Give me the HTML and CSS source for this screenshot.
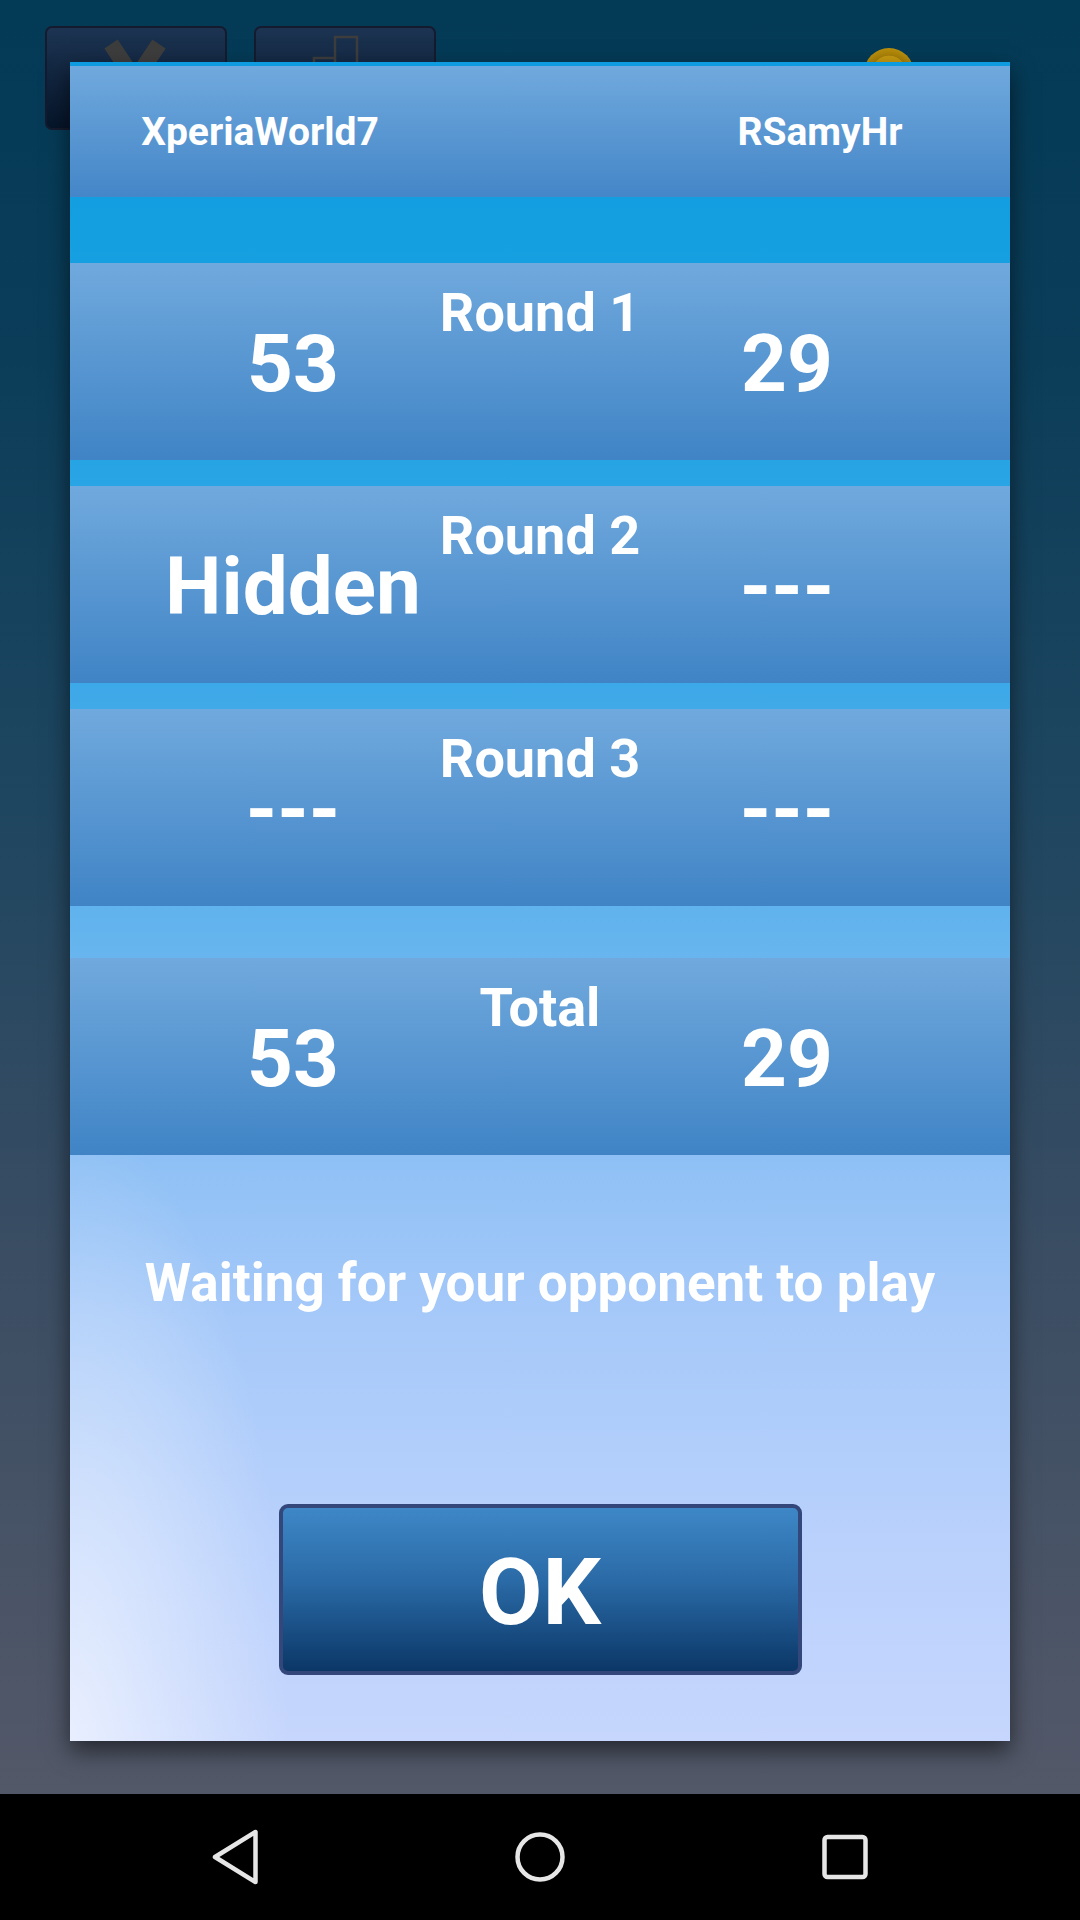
FILE: index.html
```html
<!DOCTYPE html>
<html lang="en">
<head>
  <meta charset="UTF-8">
  <title>Match Result</title>
  <link rel="stylesheet" href="styles.css">
</head>
<body>

  <div class="screen">
    <div class="toolbar">
      <div class="tool-btn">
        <svg class="tool-icon" viewBox="0 0 182 104" width="182" height="104">
          <path d="M66 18 L114 90 M114 18 L66 90" stroke="#3d3d3d" stroke-width="16" fill="none"/>
        </svg>
      </div>
      <div class="tool-btn">
        <svg class="tool-icon" viewBox="0 0 182 104" width="182" height="104">
          <path d="M60 90 V32 H81 M81 90 V11 H103 V90 M103 90 V50 H124 V90" stroke="#3d3d3d" stroke-width="2.5" fill="none"/>
        </svg>
      </div>
      <div class="toolbar-right">
        <span class="coin"></span>
        <span class="gem"></span>
      </div>
    </div>

    <div class="dialog">
      <div class="header">
        <div class="name">XperiaWorld7</div>
        <div class="name">RSamyHr</div>
      </div>

      <div class="scores">
        <div class="row">
          <div class="row-label">Round 1</div>
          <div class="row-values">
            <div class="value">53</div>
            <div class="value">29</div>
          </div>
        </div>
        <div class="row">
          <div class="row-label">Round 2</div>
          <div class="row-values">
            <div class="value">Hidden</div>
            <div class="value dash">---</div>
          </div>
        </div>
        <div class="row">
          <div class="row-label">Round 3</div>
          <div class="row-values">
            <div class="value dash">---</div>
            <div class="value dash">---</div>
          </div>
        </div>
        <div class="row total">
          <div class="row-label">Total</div>
          <div class="row-values">
            <div class="value">53</div>
            <div class="value">29</div>
          </div>
        </div>
      </div>

      <div class="message">
        <p>Waiting for your opponent to play</p>
        <button class="ok-btn">OK</button>
      </div>
    </div>
  </div>

  <div class="navbar">
    <svg class="nav-icon" viewBox="0 0 60 60" width="60" height="60">
      <path d="M50.5 5 V55 L10 30 Z" stroke="#e6e6e6" stroke-width="4.5" stroke-linejoin="round" fill="none"/>
    </svg>
    <svg class="nav-icon" viewBox="0 0 60 60" width="60" height="60">
      <circle cx="30" cy="30" r="22.5" stroke="#e6e6e6" stroke-width="4.5" fill="none"/>
    </svg>
    <svg class="nav-icon" viewBox="0 0 60 60" width="60" height="60">
      <rect x="9.5" y="10" width="41" height="40" rx="3" stroke="#e6e6e6" stroke-width="4.5" fill="none"/>
    </svg>
  </div>

</body>
</html>
```

FILE: styles.css
```css
* {
  box-sizing: border-box;
}

body {
  margin: 0;
  width: 1080px;
  height: 1920px;
  overflow: hidden;
  font-family: Roboto, 'Noto Sans', sans-serif;
  font-weight: 700;
  color: #fff;
  background: #000;
}

.screen {
  position: relative;
  height: 1794px;
  background: linear-gradient(#033a56 0%, #0b3d59 20%, #1f4660 45%, #3a4d63 70%, #535868 100%);
}

.toolbar {
  display: flex;
  gap: 27px;
  padding: 26px 0 0 45px;
}

.tool-btn {
  width: 182px;
  height: 104px;
  border: 2px solid #151b2e;
  border-radius: 7px;
  background: linear-gradient(#1c3452, #06152a);
  overflow: hidden;
}

.tool-icon {
  display: block;
  margin: -2px;
}

.toolbar-right {
  margin-left: auto;
  display: flex;
  gap: 40px;
  padding: 22px 100px 0 0;
}

.coin {
  width: 50px;
  height: 50px;
  border-radius: 50%;
  background: radial-gradient(circle, #a07a08 30%, #c79a10 32%, #c79a10 48%, #a88008 50%, #b98f0c 70%);
}

.gem {
  width: 26px;
  height: 26px;
  margin-top: 14px;
  border-radius: 50%;
  background: #5a6470;
}

/* result dialog */
.dialog {
  position: absolute;
  left: 70px;
  top: 62px;
  width: 940px;
  height: 1679px;
  padding-top: 4px;
  display: flex;
  flex-direction: column;
  background:
    radial-gradient(220px 620px at 0% 100%, rgba(255, 255, 255, 0.6), rgba(255, 255, 255, 0)),
    linear-gradient(#0e9bdf 0%, #139fe0 10%, #28a4e4 24.5%, #3fa9e8 38%, #64b4ee 52%, #8ec0f5 65%, #a6c9f9 75%, #b9d1fc 88%, #c6d6fd 100%);
  box-shadow: 0 10px 22px rgba(0, 0, 0, 0.55);
}

.header {
  height: 131px;
  display: flex;
  justify-content: space-between;
  padding-top: 47px;
  background: linear-gradient(#70a9dd, #4486c8);
}

.name {
  width: 380px;
  text-align: center;
  font-size: 39px;
  line-height: 1;
}

.scores {
  margin-top: 66px;
  display: flex;
  flex-direction: column;
  gap: 26px;
}

.row {
  height: 197px;
  padding-top: 23px;
  background: linear-gradient(#70a9dd, #4084c6);
}

.row.total {
  margin-top: 26px;
}

.row-label {
  text-align: center;
  font-size: 54px;
  line-height: 1;
}

.row-values {
  display: flex;
  justify-content: space-between;
  margin-top: -16px;
}

.value {
  width: 446px;
  text-align: center;
  font-size: 80px;
  line-height: 1;
}

.message {
  flex: 1;
  display: flex;
  flex-direction: column;
  align-items: center;
  padding-top: 102px;
}

.message p {
  margin: 0;
  font-size: 53px;
  line-height: 1;
}

.ok-btn {
  margin-top: 194px;
  width: 523px;
  height: 171px;
  padding: 6px 0 0;
  border: 4px solid #33477a;
  border-radius: 9px;
  background: linear-gradient(#3e87c7, #2a6aa6 45%, #0b3767);
  color: #fff;
  font-family: Roboto, 'Noto Sans', sans-serif;
  font-weight: 700;
  font-size: 92px;
  line-height: 1;
}

.navbar {
  height: 126px;
  display: flex;
  justify-content: center;
  align-items: center;
  gap: 245px;
  background: #000;
}

.nav-icon {
  display: block;
}
```
